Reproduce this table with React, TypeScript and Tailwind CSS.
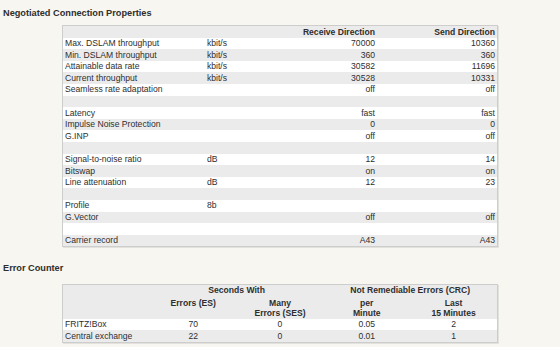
const font = { fontFamily: '"Liberation Sans", Arial, sans-serif' };

type Row = [string, string, string, string];

const props: Row[] = [
  ["Max. DSLAM throughput", "kbit/s", "70000", "10360"],
  ["Min. DSLAM throughput", "kbit/s", "360", "360"],
  ["Attainable data rate", "kbit/s", "30582", "11696"],
  ["Current throughput", "kbit/s", "30528", "10331"],
  ["Seamless rate adaptation", "", "off", "off"],
  ["", "", "", ""],
  ["Latency", "", "fast", "fast"],
  ["Impulse Noise Protection", "", "0", "0"],
  ["G.INP", "", "off", "off"],
  ["", "", "", ""],
  ["Signal-to-noise ratio", "dB", "12", "14"],
  ["Bitswap", "", "on", "on"],
  ["Line attenuation", "dB", "12", "23"],
  ["", "", "", ""],
  ["Profile", "8b", "", ""],
  ["G.Vector", "", "off", "off"],
  ["", "", "", ""],
  ["Carrier record", "", "A43", "A43"],
];

const errors = [
  ["FRITZ!Box", "70", "0", "0.05", "2"],
  ["Central exchange", "22", "0", "0.01", "1"],
];

export default function App() {
  return (
    <div className="min-h-screen bg-[#f7f6f1] text-[#2e2e2e]" style={font}>
      {/* Negotiated Connection Properties */}
      <h2 className="pl-[3px] pt-[7px] text-[9.2px] font-bold leading-[12px]">
        Negotiated Connection Properties
      </h2>
      <div className="ml-[62px] mt-[6px] w-[436px] border border-[#cdcdcd] bg-white shadow-[1px_1px_0_#e2e1dc]">
        <table className="w-full table-fixed border-collapse text-[8.6px] leading-none">
          <colgroup>
            <col className="w-[142px]" />
            <col className="w-[53px]" />
            <col className="w-[120px]" />
            <col />
          </colgroup>
          <thead>
            <tr className="h-[11.6px] bg-[#ebebeb] font-bold">
              <th />
              <th />
              <th className="pr-[3px] text-right font-bold">Receive Direction</th>
              <th className="pr-[2px] text-right font-bold">Send Direction</th>
            </tr>
          </thead>
          <tbody>
            {props.map((r, i) => (
              <tr key={i} className={`h-[11.6px] ${i % 2 === 0 ? "bg-white" : "bg-[#ebebeb]"}`}>
                <td className="pl-[2px] whitespace-nowrap">{r[0]}</td>
                <td className="pl-[2px]">{r[1]}</td>
                <td className="pr-[3px] text-right">{r[2]}</td>
                <td className="pr-[2px] text-right">{r[3]}</td>
              </tr>
            ))}
          </tbody>
        </table>
      </div>

      {/* Error Counter */}
      <h2 className="mt-[14.5px] pl-[3px] text-[9.2px] font-bold leading-[12px]">Error Counter</h2>
      <div className="ml-[62px] mt-[10px] w-[436px] border border-[#cdcdcd] bg-white shadow-[1px_1px_0_#e2e1dc]">
        <table className="w-full table-fixed border-collapse text-[8.6px] leading-none">
          <thead className="bg-[#ebebeb]">
            <tr className="h-[11.6px]">
              <th />
              <th colSpan={2} className="text-center font-bold">Seconds With</th>
              <th colSpan={2} className="text-center font-bold">Not Remediable Errors (CRC)</th>
            </tr>
            <tr className="h-[22.4px] align-top leading-[10.4px]">
              <th />
              <th className="pt-[1.5px] text-center font-bold">Errors (ES)</th>
              <th className="pt-[1.5px] text-center font-bold">
                Many
                <br />
                Errors (SES)
              </th>
              <th className="pt-[1.5px] text-center font-bold">
                per
                <br />
                Minute
              </th>
              <th className="pt-[1.5px] text-center font-bold">
                Last
                <br />
                15 Minutes
              </th>
            </tr>
          </thead>
          <tbody>
            {errors.map((r, i) => (
              <tr key={r[0]} className={`h-[11.6px] ${i % 2 === 0 ? "bg-white" : "bg-[#ebebeb]"}`}>
                <td className="pl-[2px] whitespace-nowrap">{r[0]}</td>
                <td className="text-center">{r[1]}</td>
                <td className="text-center">{r[2]}</td>
                <td className="text-center">{r[3]}</td>
                <td className="text-center">{r[4]}</td>
              </tr>
            ))}
          </tbody>
        </table>
      </div>
    </div>
  );
}
